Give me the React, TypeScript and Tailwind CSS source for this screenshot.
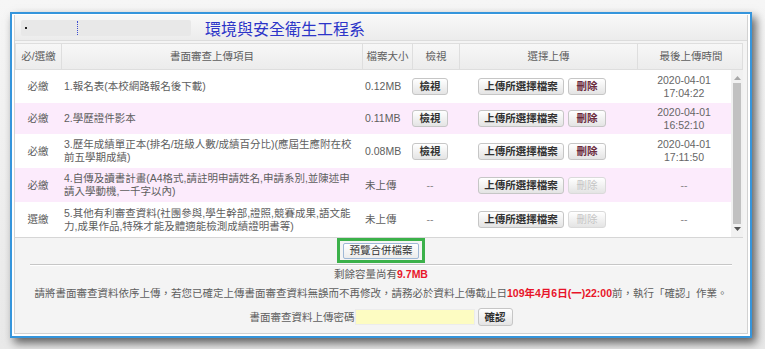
import React from 'react';

type Row = {
  req: string;
  item: string[];
  size: string;
  uploaded: boolean;
  time?: string[];
  pink: boolean;
  h: string;
};

const rows: Row[] = [
  { req: '必繳', item: ['1.報名表(本校網路報名後下載)'], size: '0.12MB', uploaded: true, time: ['2020-04-01', '17:04:22'], pink: false, h: 'h-[33px]' },
  { req: '必繳', item: ['2.學歷證件影本'], size: '0.11MB', uploaded: true, time: ['2020-04-01', '16:52:10'], pink: true, h: 'h-[31px]' },
  { req: '必繳', item: ['3.歷年成績單正本(排名/班級人數/成績百分比)(應屆生應附在校', '前五學期成績)'], size: '0.08MB', uploaded: true, time: ['2020-04-01', '17:11:50'], pink: false, h: 'h-[34px]' },
  { req: '必繳', item: ['4.自傳及讀書計畫(A4格式,請註明申請姓名,申請系別,並陳述申', '請入學動機,一千字以內)'], size: '未上傳', uploaded: false, pink: true, h: 'h-[34px]' },
  { req: '選繳', item: ['5.其他有利審查資料(社團參與,學生幹部,證照,競賽成果,語文能', '力,成果作品,特殊才能及體適能檢測成績證明書等)'], size: '未上傳', uploaded: false, pink: false, h: 'h-[35px]' },
];

const btn =
  'h-[17px] rounded-[3px] border border-[#c6c6c6] bg-linear-to-b from-white to-[#e4e4e4] text-[10.5px] font-bold leading-none flex items-center justify-center';

function Scrollbar() {
  return (
    <div className="w-[12px] bg-[#f1f1f1] flex flex-col items-center py-[4px]">
      <svg width="7" height="4" viewBox="0 0 7 4" className="mt-[2px]">
        <path d="M0 4 L3.5 0 L7 4 Z" fill="#a8a8a8" />
      </svg>
      <div className="w-[8px] flex-1 bg-[#c1c1c1] my-[3px]" />
      <svg width="7" height="4" viewBox="0 0 7 4" className="mb-[2px]">
        <path d="M0 0 L3.5 4 L7 0 Z" fill="#555" />
      </svg>
    </div>
  );
}

export default function App() {
  return (
    <div className="w-[765px] h-[349px] overflow-hidden bg-linear-to-b from-[#f6f6f6] to-[#e9e9e9] pt-[12px] pl-[10px] font-['Liberation_Sans','Noto_Sans_CJK_TC',sans-serif] text-[#5e5e5e]">
      <div className="w-[742px] h-[326px] border-2 border-[#3595dc] bg-white pt-px px-[2px] pb-[2px] shadow-[4px_5px_9px_rgba(0,0,0,0.6)]">
        <div className="h-full border-x border-b border-[#d2d2d2] bg-[#f4f4f4] flex flex-col">
          {/* title bar */}
          <div className="h-[26px] flex items-center bg-linear-to-b from-[#f8f8f8] to-[#ececec] border-b border-[#dcdcdc] relative">
            <div className="w-[170px] h-[16px] ml-[6px] bg-[#e8e8e8] rounded-[2px] flex items-center relative">
              <div className="w-[2px] h-[2px] bg-[#222] ml-[4px]" />
              <div className="absolute left-[56px] top-[1px] w-[2px] h-[14px] border-l border-dotted border-[#3a4ad0]" />
            </div>
            <span className="ml-[14px] text-[16px] leading-none text-[#2c34c8] font-['Noto_Sans_CJK_TC',sans-serif]">
              環境與安全衛生工程系
            </span>
          </div>

          {/* table */}
          <div className="mt-[2px] w-[728px] border-b border-[#d6d6d6]">
            <div className="grid grid-cols-[46px_301px_50px_47px_178px_106px] h-[27px] bg-linear-to-b from-[#f7f7f7] to-[#ececec] border border-[#dedede] text-[10.5px] text-[#5e5e5e]">
              {['必/選繳', '書面審查上傳項目', '檔案大小', '檢視', '選擇上傳', '最後上傳時間'].map((h, i) => (
                <div key={h} className={`flex items-center justify-center ${i < 5 ? 'border-r border-[#dedede]' : ''}`}>
                  {h}
                </div>
              ))}
            </div>
            <div className="flex bg-white">
              <div className="flex-1">
                {rows.map((r, i) => (
                  <div
                    key={i}
                    className={`grid grid-cols-[46px_301px_50px_47px_178px_94px] items-center text-[10.5px] leading-[13px] ${r.h} ${r.pink ? 'bg-[#fcebfc]' : 'bg-white'}`}
                  >
                    <div className="text-center">{r.req}</div>
                    <div className="pl-[3px] whitespace-nowrap">
                      {r.item.map((t) => (
                        <div key={t}>{t}</div>
                      ))}
                    </div>
                    <div className="pl-[3px]">{r.size}</div>
                    <div>
                      {r.uploaded ? (
                        <div className={`${btn} w-[36px] text-[#333]`}>檢視</div>
                      ) : (
                        <div className="w-[36px] text-center text-[#888]">--</div>
                      )}
                    </div>
                    <div className="flex gap-[4px] pl-[19px]">
                      <div className={`${btn} w-[86px] text-[#333]`}>上傳所選擇檔案</div>
                      <div
                        className={`${btn} w-[38px] ${r.uploaded ? 'text-[#6a2a3c]' : 'text-[#c4c4c4] font-normal border-[#dadada]'}`}
                      >
                        刪除
                      </div>
                    </div>
                    <div className="text-center text-[#666]">
                      {r.time ? (
                        r.time.map((t) => <div key={t}>{t}</div>)
                      ) : (
                        <div className="text-[#888]">--</div>
                      )}
                    </div>
                  </div>
                ))}
              </div>
              <Scrollbar />
            </div>
          </div>

          {/* footer */}
          <div className="flex-1 flex flex-col items-center text-[10.5px] leading-[13px] text-[#5e5e5e]">
            <div className="w-[88px] h-[25px] border-[3px] border-[#3bb14a] flex items-center justify-center">
              <div className="w-[76px] h-[16px] rounded-[2px] border border-[#9fb8d6] bg-linear-to-b from-white to-[#ececec] flex items-center justify-center text-[10.5px] text-[#333]">
                預覽合併檔案
              </div>
            </div>
            <div className="w-[702px] mt-[1px] border-t border-[#c6c6c6] border-b border-b-white" />
            <div className="mt-[2px]">
              剩餘容量尚有<span className="font-bold text-[#e8142a]">9.7MB</span>
            </div>
            <div className="mt-[6px] text-[10.5px] whitespace-nowrap">
              請將書面審查資料依序上傳，若您已確定上傳書面審查資料無誤而不再修改，請務必於資料上傳截止日
              <span className="font-bold text-[#e8142a]">109年4月6日(一)22:00</span>前，執行「確認」作業。
            </div>
            <div className="mt-[8px] flex items-center">
              <span>書面審查資料上傳密碼</span>
              <div className="w-[120px] h-[16px] bg-[#fdfcc2] border border-[#ececec]" />
              <div className={`${btn} w-[35px] h-[18px] ml-[3px] text-[#333]`}>確認</div>
            </div>
          </div>
        </div>
      </div>
    </div>
  );
}
